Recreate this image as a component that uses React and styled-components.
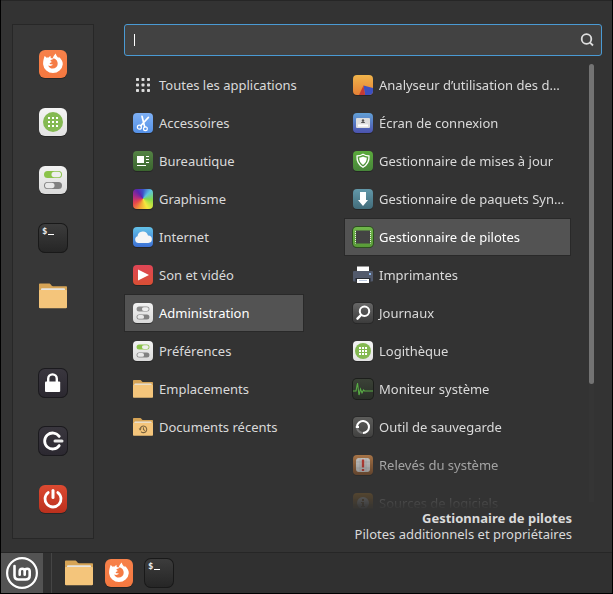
import React, { useId } from "react";
import styled, { createGlobalStyle, css } from "styled-components";

const GlobalStyle = createGlobalStyle`
  * { box-sizing: border-box; }
  body {
    margin: 0;
    background: #000;
    color: #dadada;
    font: 13px/16px "Noto Sans", sans-serif;
  }
  button, input { font: inherit; color: inherit; }
`;

const Desktop = styled.div`
  display: flex;
  flex-direction: column;
  height: 100vh;
  padding: 0 1px 1px;
`;

const Menu = styled.main`
  display: flex;
  flex: 1;
  gap: 30px;
  min-height: 0;
  padding: 23px 10px 10px 11px;
  background: #333;
  border-top: 1px solid #262626;
`;

const Sidebar = styled.nav`
  display: flex;
  flex-direction: column;
  justify-content: space-between;
  align-items: center;
  width: 82px;
  margin-bottom: 3px;
  padding: 25px 0;
  background: #373737;
  border: 1px solid #272727;
`;

const SidebarGroup = styled.div`
  display: flex;
  flex-direction: column;
  gap: 30px;
`;

const IconButton = styled.button`
  display: flex;
  padding: 0;
  border: 0;
  background: none;
`;

const Content = styled.div`
  display: flex;
  flex: 1;
  flex-direction: column;
  min-width: 0;
`;

const SearchBox = styled.label`
  position: relative;
  display: flex;
  align-items: center;
  height: 32px;
  padding: 0 7px 0 10px;
  background: #424242;
  border: 1px solid #4a9ad4;
  border-radius: 3px;
`;

const SearchInput = styled.input`
  flex: 1;
  min-width: 0;
  padding: 0;
  border: 0;
  outline: 0;
  background: none;
  caret-color: transparent;
`;

const Caret = styled.span`
  position: absolute;
  left: 9px;
  width: 1px;
  height: 12px;
  background: #fff;
`;

const Columns = styled.div`
  display: flex;
  flex: 1;
  min-height: 0;
  padding: 8px 8px 0 0;
`;

const List = styled.ul`
  margin: 0;
  padding: 2px 0 0;
  list-style: none;
`;

const CategoryList = styled(List)`
  width: 180px;
  margin-right: 40px;
`;

const AppList = styled(List)`
  flex: 1;
  min-width: 0;
  overflow: hidden;
  mask-image: linear-gradient(#000 calc(100% - 66px), transparent);
`;

const Row = styled.button`
  display: flex;
  align-items: center;
  gap: 6px;
  width: 100%;
  height: 38px;
  padding: 0 7px 0 8px;
  background: none;
  border: 1px solid transparent;
  text-align: left;
  white-space: nowrap;
  ${({ $selected }) => $selected && css`
    background: #535353;
    border-color: #292929;
    color: #fff;
  `}
`;

const Track = styled.div`
  width: 5px;
  margin: 0 0 8px 18px;
  background: #353535;
`;

const Thumb = styled.div`
  height: 73%;
  background: #737373;
  border-radius: 3px;
`;

const Description = styled.footer`
  padding-right: 30px;
  text-align: right;
`;

const DescriptionTitle = styled.strong`
  display: block;
`;

const Taskbar = styled.footer`
  display: flex;
  align-items: center;
  gap: 12px;
  height: 41px;
  background: #303030;
  border-top: 1px solid #262626;
`;

const MenuButton = styled.button`
  display: flex;
  align-items: center;
  justify-content: center;
  width: 42px;
  height: 40px;
  margin-right: -4px;
  padding: 0;
  border: 0;
  background: #535353;
`;

const Separator = styled.span`
  width: 1px;
  height: 40px;
  margin-right: 1px;
  background: #454545;
`;

const Glyph = styled.svg`
  display: block;
  flex: none;
  overflow: visible;
`;

const ColorWheel = styled.span`
  flex: none;
  width: 20px;
  height: 20px;
  border-radius: 4px;
  box-shadow: 0 1px 1px #222;
  background: conic-gradient(from 0deg at 50% 48%, #3c52c8, #5cc4e0 45deg, #82d848 95deg, #f4e83e 155deg, #f2a136 200deg, #e8484a 240deg, #b02b84 280deg, #5b25ae 325deg, #3c52c8);
`;

function Tile({ size = 20, from, to, edge, children }) {
  const id = useId();
  const radius = size === 28 ? 6 : 4;
  return (
    <Glyph width={size} height={size} viewBox={`0 0 ${size} ${size}`} aria-hidden="true">
      <defs>
        <linearGradient id={id} x1="0" y1="0" x2="0" y2="1">
          <stop stopColor={from} />
          <stop offset="1" stopColor={to} />
        </linearGradient>
      </defs>
      <rect y="1" width={size} height={size} rx={radius} fill="#1c1c1c" opacity=".6" />
      {edge && <rect x="-1" y="-1" width={size + 2} height={size + 2} rx={radius + 1} fill={edge} />}
      <rect width={size} height={size} rx={radius} fill={`url(#${id})`} />
      {children}
    </Glyph>
  );
}

const Firefox = () => (
  <Tile size={28} from="#f7814a" to="#f47840">
    <path fill="#fff" d="M5.6 6c.8.3 1.4.9 1.9 1.7.7-.3 1.5-.3 2.2-.1.4-.7 1.1-1.3 2-1.5-.3.9-.1 1.5.2 2 .5.4 1.1.4 1.7.4C14.3 7 14.8 5 16.9 3.6c.1 2.1 1.4 3.2 2.5 4.4.2-.3.3-.8.2-1.3 3 2.2 4.3 5 4.2 7.5a9.9 9.9 0 0 1-19.7 0c-.1-2.9.6-5.4 1.5-8.2Z" />
    <path fill="#f57b44" d="M11.3 10.4c1.7-.8 2.6-.9 3.4-2.1 2.8 1 4.2 3.2 4 5.8-.2 2.8-2.3 4.5-4.9 4.5-2.2 0-4-1.2-4.6-3.1 1.8.9 3.4.4 4.9-.7-.9-.4-2.3-.1-3.5-1 .1-1 1.2-1.3 2.8-1.8-1-.3-1.8-.8-2.1-1.6Z" />
  </Tile>
);

const dots = [0, 1, 2].flatMap((y) => [0, 1, 2].map((x) => [x, y]));

const Software = ({ size = 20 }) => {
  const big = size === 28;
  const start = big ? 9 : 6;
  const step = big ? 4 : 3;
  return (
    <Tile size={size} from="#f4f4f4" to="#e2e2e2">
      <circle cx={size / 2} cy={size / 2} r={big ? 10 : 8} fill="#84b952" />
      {dots.map(([x, y]) => (
        <rect key={`${x}${y}`} x={start + x * step} y={start + y * step} width="2" height="2" fill="#fff" />
      ))}
    </Tile>
  );
};

const Toggles = ({ size = 20, accent = "#8bc34a" }) => (
  <Tile size={size} from="#f2f2f2" to="#dadada">
    <g transform={size === 20 ? "scale(.7143)" : undefined}>
      <rect x="5" y="5" width="18" height="7" rx="3.5" fill={accent} />
      <rect x="12.5" y="5.8" width="9.5" height="5.4" rx="2.7" fill="#eee" />
      <rect x="5" y="16" width="18" height="7" rx="3.5" fill="#818181" />
      <rect x="6" y="16.8" width="9.5" height="5.4" rx="2.7" fill="#e8e8e8" />
    </g>
  </Tile>
);

const DollarSign = styled.text`
  font: bold 9px "DejaVu Sans Mono", monospace;
  fill: #e8e8e8;
`;

const Terminal = () => (
  <Tile size={28} from="#3c3c3c" to="#262626" edge="#191919">
    <DollarSign x="3" y="10">$</DollarSign>
    <rect x="9" y="10" width="6" height="1" fill="#fff" />
  </Tile>
);

const Folder = ({ size = 20, recent }) => (
  <Glyph width={size} height={size} viewBox="0 0 28 28" aria-hidden="true">
    <path fill="#d6a456" d="M0 2.5C0 1.8.5 1.5 1 1.5h9c2 0 2 2.7 4 2.7h13c.6 0 1 .4 1 1V12H0Z" />
    <rect x="2" y="6.3" width="24" height="5" rx="1" fill="#e6e4e0" />
    <path fill="#f4c57b" d="M0 9c0-.7.4-1 1-1h26c.6 0 1 .3 1 1v16c0 .8-.4 1.2-1 1.2H1c-.6 0-1-.4-1-1.2Z" />
    {recent && (
      <g fill="none" stroke="#7b643f" strokeWidth="1.5">
        <path d="M10 17.2a4.6 4.6 0 1 1 1.2 3.2M14.6 14.5v3l2 1.5" />
        <path fill="#7b643f" stroke="none" d="M8 16h4.2L10 19.2Z" />
      </g>
    )}
  </Glyph>
);

const Lock = () => (
  <Tile size={28} from="#39363e" to="#2b2830" edge="#1b1a1e">
    <path d="M9.2 14V9.7a4.3 4.3 0 0 1 8.6 0V14" fill="none" stroke="#fff" strokeWidth="2.4" />
    <rect x="6" y="12.5" width="15.2" height="10.5" rx="1" fill="#fff" />
  </Tile>
);

const Logout = () => (
  <Tile size={28} from="#39363e" to="#2b2830" edge="#1b1a1e">
    <path d="M20.2 9.4a8 8 0 1 0 0 9.2" fill="none" stroke="#fff" strokeWidth="2.8" strokeLinecap="round" />
    <path d="M16 14h7" stroke="#e8e8e8" strokeWidth="3" strokeLinecap="round" />
  </Tile>
);

const Power = () => (
  <Tile size={28} from="#dc4a31" to="#bb301d">
    <path d="M9.2 7.6a8 8 0 1 0 9.600 0" fill="none" stroke="#fff" strokeWidth="2.8" strokeLinecap="round" />
    <path d="M14 5.4v7" stroke="#fff" strokeWidth="3" strokeLinecap="round" />
  </Tile>
);

const MintLogo = () => (
  <Glyph width="32" height="32" viewBox="0 0 32 32" fill="none" stroke="#fff" aria-hidden="true">
    <circle cx="16" cy="16" r="14.9" strokeWidth="2.2" />
    <path strokeWidth="2.6" strokeLinecap="round" strokeLinejoin="round" d="M8.5 9v9.5c0 2.5 1.5 4 4 4h7.2c2.5 0 4-1.5 4-4v-4.2a2.5 2.5 0 0 0-5 0v3.5M18.7 17.8v-3.5a2.5 2.5 0 0 0-5 0v3.5" />
  </Glyph>
);

const AllApps = () => (
  <Glyph width="20" height="20" viewBox="0 0 20 20" fill="#dcdcdc" aria-hidden="true">
    {dots.map(([x, y]) => (
      <rect key={`${x}${y}`} x={3 + x * 5.5} y={3 + y * 5.5} width="3" height="3" rx=".8" />
    ))}
  </Glyph>
);

const Scissors = () => (
  <Tile from="#7eb0f5" to="#5591e6">
    <g fill="none" stroke="#fff" strokeWidth="1.2">
      <circle cx="6.4" cy="14.2" r="2" />
      <circle cx="12.4" cy="15.8" r="1.9" />
      <path strokeWidth="1.7" strokeLinecap="round" d="M7.8 12.7 15.4 4.4M11.7 13.9 9 3.3" />
    </g>
  </Tile>
);

const Office = () => (
  <Tile from="#548344" to="#3b652f">
    <path fill="#fff" d="M4 5h7v7H4ZM13 5h3v1h-3ZM13 8h3v1h-3ZM13 11h3v1h-3ZM4 14h9v1H4Z" />
  </Tile>
);

const Cloud = () => (
  <Tile from="#63c2e8" to="#3c70d4">
    <path fill="#f5f5f5" d="M5.5 16a3.5 3.5 0 0 1-1-6.8A5.4 5.4 0 0 1 15 8.4a3.8 3.8 0 0 1 .2 7.6Z" />
  </Tile>
);

const Play = () => (
  <Tile from="#df4656" to="#d94f34">
    <path fill="#fff" d="M5 4.5 16 10 5 15.5Z" />
  </Tile>
);

const DiskUsage = () => (
  <Tile from="#f0b44b" to="#e58035">
    <path fill="#3c50c2" d="M10.5 10.5 20 13v3a4 4 0 0 1-4 4h-4Z" />
    <path fill="#c43a35" d="M10.5 10.5 12 20H6Z" />
  </Tile>
);

const LoginScreen = () => (
  <Tile from="#62a0d6" to="#4b52ae">
    <rect x="3" y="5" width="14" height="10" rx="1" fill="#dedede" />
    <circle cx="10" cy="7.4" r="1.2" fill="#555" />
    <path fill="#555" d="M8 10c0-2 4-2 4 0Z" />
    <rect x="5" y="11.5" width="10" height="2" fill="#fff" />
  </Tile>
);

const Shield = () => (
  <Tile from="#5baa3c" to="#47853a">
    <path d="M10 3.2c2 1.3 3.8 1.7 6 1.8.3 5-2 9-6 11.2C6 14 3.7 10 4 5c2.2-.1 4-.5 6-1.8Z" fill="none" stroke="#fff" strokeWidth="1.3" />
    <path d="M10 5.6c1.3.8 2.5 1 3.8 1.2 0 3-1.4 5.6-3.8 7.2-2.4-1.6-3.8-4.2-3.8-7.2 1.3-.2 2.5-.4 3.8-1.2Z" fill="#fff" />
  </Tile>
);

const Download = () => (
  <Tile from="#6298a9" to="#426c7a">
    <path fill="#fff" d="M7 3h6v8h2l-5 6-5-6h2Z" />
  </Tile>
);

const Chip = () => (
  <Tile from="#70b74b" to="#599b38" edge="#2d4f20">
    <rect x="3" y="3.5" width="14" height="13" fill="#434343" />
    <path d="M2.5 4v12.5M17.5 4v12.5" stroke="#e7eee3" strokeDasharray="1 1" />
  </Tile>
);

const Printer = () => (
  <Glyph width="20" height="20" viewBox="0 0 20 20" aria-hidden="true">
    <path fill="#fff" d="M4 1.5h12v5H4Z" />
    <rect y="6" width="20" height="10.5" rx="1" fill="#525a6c" />
    <rect x="2.5" y="13" width="15" height="3.5" fill="#282c34" />
    <rect x="4" y="14" width="12" height="4" fill="#fff" />
    <path d="M6 15.5h8" stroke="#bcc9df" />
    <rect x="16" y="8" width="2" height="2" fill="#8db7e8" />
  </Glyph>
);

const Magnifier = () => (
  <Tile from="#666" to="#3c3c3c" edge="#292929">
    <circle cx="11.5" cy="8.3" r="4.7" fill="none" stroke="#fff" strokeWidth="2" />
    <path d="m8 12-3.5 3.7" stroke="#fff" strokeWidth="2.5" strokeLinecap="round" />
  </Tile>
);

const Pulse = () => (
  <Tile from="#3b4237" to="#292f27" edge="#1c1e1b">
    <path d="M0 12h3l1.500-8 1.500 12 1.500-6 1.500 4 1.500-3 1 1H20" fill="none" stroke="#58ac44" strokeWidth="1.1" />
  </Tile>
);

const Backup = () => (
  <Tile from="#5d5d5b" to="#414140" edge="#2a2a2a">
    <circle cx="10" cy="10" r="6" fill="none" stroke="#777" strokeWidth="2" />
    <path d="M4 9.5a6 6 0 1 1 6 6.5M2.8 10H6" fill="none" stroke="#fff" strokeWidth="2" />
  </Tile>
);

const Reports = () => (
  <Tile from="#bf824c" to="#8d552a">
    <rect x="3" y="3" width="14" height="14" rx="3" fill="#e4e4e4" />
    <path d="M3 7h14M3 13h14M7 3v14M13 3v14" stroke="#bbb" strokeWidth=".5" />
    <path fill="#d63a31" d="M8.8 4.5h2.4v8H8.8ZM8.8 14h2.4v2H8.8Z" />
  </Tile>
);

const Sources = () => (
  <Tile from="#b57b27" to="#a9711f">
    <circle cx="10" cy="10" r="6" fill="#ddd" />
    <path d="M9 6h2v2H9ZM8 9h3v4h1v1H8v-1h1v-3H8Z" fill="#885b1c" />
  </Tile>
);

const SearchIcon = () => (
  <Glyph width="14" height="14" viewBox="0 0 14 14" fill="none" stroke="#dedede" strokeWidth="1.8" aria-hidden="true">
    <circle cx="6.5" cy="6" r="4.8" />
    <path d="m9.800 9.300 3.200 3.200" />
  </Glyph>
);

const favourites = [
  ["Firefox", <Firefox />],
  ["Logithèque", <Software size={28} />],
  ["Paramètres", <Toggles size={28} />],
  ["Terminal", <Terminal />],
  ["Fichiers", <Folder size={28} />],
];

const session = [
  ["Verrouiller l’écran", <Lock />],
  ["Fermer la session", <Logout />],
  ["Éteindre", <Power />],
];

const categories = [
  ["Toutes les applications", <AllApps />],
  ["Accessoires", <Scissors />],
  ["Bureautique", <Office />],
  ["Graphisme", <ColorWheel />],
  ["Internet", <Cloud />],
  ["Son et vidéo", <Play />],
  ["Administration", <Toggles accent="#8c8c8c" />],
  ["Préférences", <Toggles />],
  ["Emplacements", <Folder />],
  ["Documents récents", <Folder recent />],
];

const applications = [
  ["Analyseur d’utilisation des d…", <DiskUsage />],
  ["Écran de connexion", <LoginScreen />],
  ["Gestionnaire de mises à jour", <Shield />],
  ["Gestionnaire de paquets Syn…", <Download />],
  ["Gestionnaire de pilotes", <Chip />],
  ["Imprimantes", <Printer />],
  ["Journaux", <Magnifier />],
  ["Logithèque", <Software />],
  ["Moniteur système", <Pulse />],
  ["Outil de sauvegarde", <Backup />],
  ["Relevés du système", <Reports />],
  ["Sources de logiciels", <Sources />],
];

const Launchers = ({ items }) =>
  items.map(([name, icon]) => (
    <IconButton key={name} type="button" aria-label={name}>{icon}</IconButton>
  ));

const Rows = ({ items, selected }) =>
  items.map(([name, icon]) => (
    <li key={name}>
      <Row type="button" $selected={name === selected}>
        {icon}
        <span>{name}</span>
      </Row>
    </li>
  ));

export default function App() {
  return (
    <Desktop>
      <GlobalStyle />
      <Menu>
        <Sidebar aria-label="Favoris">
          <SidebarGroup><Launchers items={favourites} /></SidebarGroup>
          <SidebarGroup><Launchers items={session} /></SidebarGroup>
        </Sidebar>
        <Content>
          <SearchBox>
            <Caret />
            <SearchInput type="text" aria-label="Rechercher" />
            <SearchIcon />
          </SearchBox>
          <Columns>
            <CategoryList><Rows items={categories} selected="Administration" /></CategoryList>
            <AppList><Rows items={applications} selected="Gestionnaire de pilotes" /></AppList>
            <Track><Thumb /></Track>
          </Columns>
          <Description>
            <DescriptionTitle>Gestionnaire de pilotes</DescriptionTitle>
            Pilotes additionnels et propriétaires
          </Description>
        </Content>
      </Menu>
      <Taskbar>
        <MenuButton type="button" aria-label="Menu"><MintLogo /></MenuButton>
        <Separator />
        <Launchers items={[favourites[4], favourites[0], favourites[3]]} />
      </Taskbar>
    </Desktop>
  );
}
